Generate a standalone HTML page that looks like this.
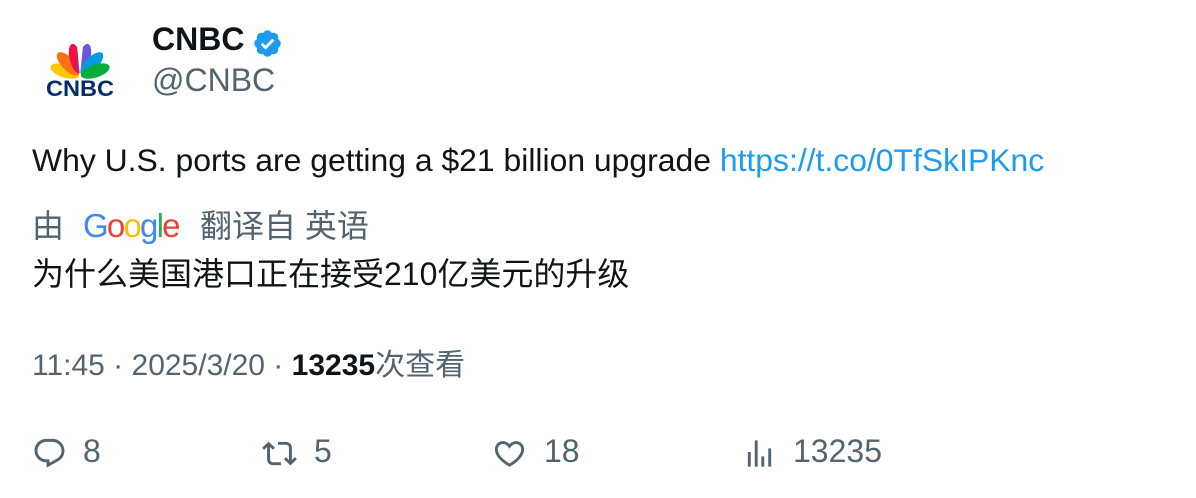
<!DOCTYPE html><html><head><meta charset="utf-8"><style>
body{margin:0;width:1196px;height:498px;background:#fff;font-family:"Liberation Sans","Noto Sans CJK SC",sans-serif;color:#0f1419;position:relative;overflow:hidden}
.a{position:absolute;white-space:nowrap}
.g{color:#536471}
</style></head><body>
<svg class="a" style="left:44px;top:38px" width="72" height="62" viewBox="0 0 72 62">
<g transform="translate(36,38)">
<ellipse rx="6.5" ry="15" fill="#ffc60b" transform="rotate(-72) translate(0,-16)"/>
<ellipse rx="6.5" ry="15" fill="#ff7112" transform="rotate(-44) translate(0,-17)"/>
<ellipse rx="6" ry="15" fill="#ee1144" transform="rotate(-14) translate(0,-18)"/>
<ellipse rx="6" ry="15" fill="#6e55dc" transform="rotate(14) translate(0,-18)"/>
<ellipse rx="6.5" ry="15" fill="#069de0" transform="rotate(44) translate(0,-17)"/>
<ellipse rx="6.5" ry="15" fill="#05ac3f" transform="rotate(72) translate(0,-16)"/>
<path d="M0 0 L-3 -30 L3 -30Z" fill="#fff"/>
</g>
<text x="36" y="58" text-anchor="middle" font-family="Liberation Sans" font-weight="bold" font-size="22" fill="#012d6a" textLength="68" lengthAdjust="spacingAndGlyphs">CNBC</text>
</svg>
<div class="a" style="left:152px;top:21px;font-size:32px;font-weight:bold">CNBC</div>
<svg class="a" style="left:252px;top:28px" width="31" height="31" viewBox="0 0 24 24"><path fill="#1d9bf0" d="M22.25 12c0-1.43-.88-2.670-2.19-3.34.46-1.39.2-2.9-.81-3.910s-2.52-1.27-3.91-.81c-.66-1.31-1.910-2.19-3.34-2.19s-2.67.88-3.33 2.19c-1.4-.46-2.91-.2-3.920.81s-1.26 2.52-.8 3.91c-1.31.67-2.2 1.91-2.2 3.34s.89 2.67 2.2 3.34c-.46 1.39-.21 2.9.8 3.91s2.52 1.26 3.910.81c.67 1.31 1.91 2.19 3.34 2.19s2.68-.88 3.34-2.19c1.39.45 2.9.2 3.91-.81s1.27-2.52.81-3.91c1.31-.67 2.19-1.91 2.19-3.34z"/><path d="M7.5 12.2l3 3 6-6.2" stroke="#fff" stroke-width="2.2" fill="none"/></svg>
<div class="a g" style="left:152px;top:62px;font-size:32px">@CNBC</div>
<div class="a" style="left:32px;top:142px;font-size:31.9px">Why U.S. ports are getting a $21 billion upgrade <span style="color:#1d9bf0">https://t.co/0TfSkIPKnc</span></div>
<div class="a g" style="left:32px;top:201px;font-size:32px">由</div>
<div class="a" style="left:83px;top:207px;font-size:33px;letter-spacing:-1.8px"><span style="color:#4285f4">G</span><span style="color:#ea4335">o</span><span style="color:#fbbc05">o</span><span style="color:#4285f4">g</span><span style="color:#34a853">l</span><span style="color:#ea4335">e</span></div>
<div class="a g" style="left:200px;top:201px;font-size:32px">翻译自 英语</div>
<div class="a" style="left:32px;top:249px;font-size:32px">为什么美国港口正在接受210亿美元的升级</div>
<div class="a g" style="left:32px;top:340px;font-size:30px">11:45 · 2025/3/20 · <b style="color:#0f1419">13235</b>次查看</div>
<svg class="a" style="left:32px;top:436px" width="35" height="35" viewBox="0 0 24 24"><path fill="#536471" d="M1.751 10c0-4.42 3.584-8 8.005-8h4.366c4.49 0 8.129 3.64 8.129 8.13 0 2.960-1.607 5.680-4.196 7.110l-8.054 4.460v-3.690h-.067c-4.490.1-8.183-3.510-8.183-8.010zm8.005-6c-3.317 0-6.005 2.690-6.005 6 0 3.370 2.770 6.080 6.138 6.010l.351-.01h1.761v2.300l5.087-2.810c1.951-1.080 3.163-3.130 3.163-5.360 0-3.390-2.744-6.130-6.129-6.130H9.756z"/></svg>
<div class="a g" style="left:83px;top:433px;font-size:32px">8</div>
<svg class="a" style="left:262px;top:436px" width="35" height="35" viewBox="0 0 24 24"><path fill="#536471" d="M4.5 3.88l4.432 4.14-1.364 1.46L5.5 7.55V16c0 1.1.896 2 2 2H13v2H7.5c-2.209 0-4-1.79-4-4V7.55L1.432 9.48.068 8.02 4.5 3.88zM16.5 6H11V4h5.5c2.209 0 4 1.79 4 4v8.45l2.068-1.930 1.364 1.460-4.432 4.140-4.432-4.140 1.364-1.460 2.068 1.930V8c0-1.1-.896-2-2-2z"/></svg>
<div class="a g" style="left:314px;top:433px;font-size:32px">5</div>
<svg class="a" style="left:492px;top:436px" width="35" height="35" viewBox="0 0 24 24"><path fill="#536471" d="M16.697 5.5c-1.222-.06-2.679.51-3.89 2.16l-.805 1.09-.806-1.09C9.984 6.01 8.526 5.44 7.304 5.5c-1.243.07-2.349.78-2.91 1.910-.552 1.120-.633 2.780.479 4.820 1.074 1.970 3.257 4.270 7.129 6.610 3.870-2.340 6.052-4.640 7.126-6.610 1.111-2.040 1.030-3.700.477-4.820-.561-1.130-1.666-1.840-2.908-1.910zm4.187 7.690c-1.351 2.480-4.001 5.120-8.379 7.670l-.503.3-.504-.3c-4.379-2.550-7.029-5.190-8.382-7.670-1.360-2.500-1.410-4.860-.514-6.670.887-1.790 2.647-2.910 4.601-3.010 1.651-.090 3.368.560 4.798 2.010 1.429-1.450 3.146-2.100 4.796-2.010 1.954.1 3.714 1.220 4.601 3.010.896 1.810.846 4.170-.514 6.670z"/></svg>
<div class="a g" style="left:544px;top:433px;font-size:32px">18</div>
<svg class="a" style="left:742px;top:436px" width="35" height="35" viewBox="0 0 24 24"><path fill="#536471" d="M8.75 21V3h2v18h-2zM18 21V8.5h2V21h-2zM4 21l.004-10h2L6 21H4zm9.248 0v-7h2v7h-2z"/></svg>
<div class="a g" style="left:793px;top:433px;font-size:32px">13235</div>
</body></html>
